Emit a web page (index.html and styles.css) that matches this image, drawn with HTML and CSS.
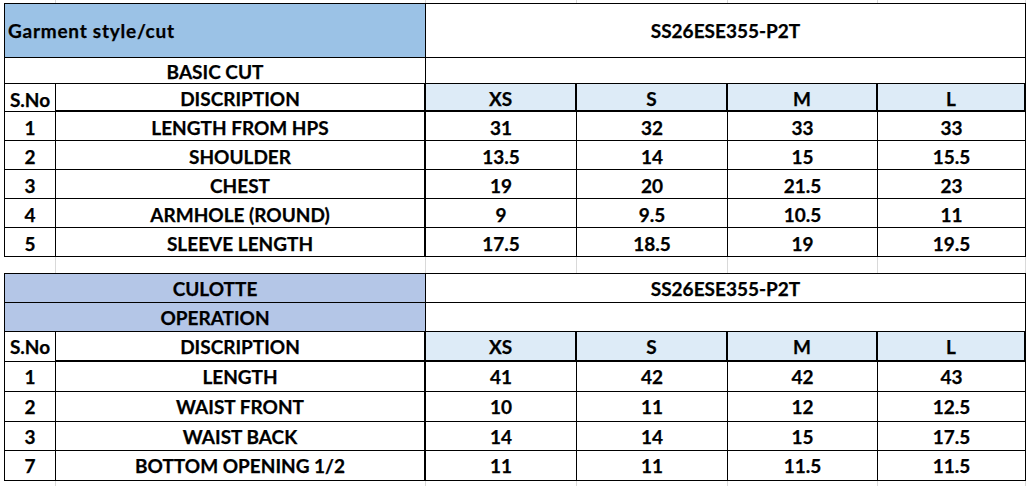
FILE: index.html
```html
<!DOCTYPE html>
<html>
<head>
<meta charset="utf-8">
<title>Garment spec</title>
<link rel="stylesheet" href="styles.css">
</head>
<body>
<div class="sheet">
  <div class="gridstrip strip-top"><span></span><span></span><span></span><span></span><span></span><span></span></div>

  <div class="spec spec-one">
    <div class="c span2 garment">Garment style/cut</div>
    <div class="c span4 code">SS26ESE355-P2T</div>
    <div class="c span2 sub">BASIC CUT</div>
    <div class="c span4 sub"></div>

    <div class="c hd sno">S.No</div>
    <div class="c hd desc thickb">DISCRIPTION</div>
    <div class="c hd size">XS</div>
    <div class="c hd size">S</div>
    <div class="c hd size">M</div>
    <div class="c hd size">L</div>

    <div class="c row">1</div><div class="c row desc">LENGTH FROM HPS</div><div class="c row">31</div><div class="c row">32</div><div class="c row">33</div><div class="c row">33</div>
    <div class="c row">2</div><div class="c row desc">SHOULDER</div><div class="c row">13.5</div><div class="c row">14</div><div class="c row">15</div><div class="c row">15.5</div>
    <div class="c row">3</div><div class="c row desc">CHEST</div><div class="c row">19</div><div class="c row">20</div><div class="c row">21.5</div><div class="c row">23</div>
    <div class="c row">4</div><div class="c row desc">ARMHOLE (ROUND)</div><div class="c row">9</div><div class="c row">9.5</div><div class="c row">10.5</div><div class="c row">11</div>
    <div class="c row">5</div><div class="c row desc">SLEEVE LENGTH</div><div class="c row">17.5</div><div class="c row">18.5</div><div class="c row">19</div><div class="c row">19.5</div>
  </div>

  <div class="gridstrip strip-gap"><span></span><span></span><span></span><span></span><span></span><span></span></div>

  <div class="spec spec-two">
    <div class="c span2 band">CULOTTE</div>
    <div class="c span4">SS26ESE355-P2T</div>
    <div class="c span2 band">OPERATION</div>
    <div class="c span4"></div>

    <div class="c sno">S.No</div>
    <div class="c desc thickb">DISCRIPTION</div>
    <div class="c size">XS</div>
    <div class="c size">S</div>
    <div class="c size">M</div>
    <div class="c size">L</div>

    <div class="c">1</div><div class="c desc">LENGTH</div><div class="c">41</div><div class="c">42</div><div class="c">42</div><div class="c">43</div>
    <div class="c">2</div><div class="c desc">WAIST FRONT</div><div class="c">10</div><div class="c">11</div><div class="c">12</div><div class="c">12.5</div>
    <div class="c">3</div><div class="c desc">WAIST BACK</div><div class="c">14</div><div class="c">14</div><div class="c">15</div><div class="c">17.5</div>
    <div class="c">7</div><div class="c desc">BOTTOM OPENING 1/2</div><div class="c">11</div><div class="c">11</div><div class="c">11.5</div><div class="c">11.5</div>
  </div>

  <div class="gridstrip strip-bottom"><span></span><span></span><span></span><span></span><span></span><span></span></div>
</div>
</body>
</html>
```

FILE: styles.css
```css
* {
  box-sizing: border-box;
}

body {
  margin: 0;
  background: #ffffff;
  color: #000000;
  font-family: Lato, "Liberation Sans", sans-serif;
  font-weight: 700;
  font-size: 19px;
}

.sheet {
  padding-left: 4px;
  width: 1030px;
  display: flex;
  flex-direction: column;
}

.spec,
.gridstrip {
  display: grid;
  grid-template-columns: 51px 370px 151px 151px 150px 148px;
  width: 1022px;
}

.spec {
  border-top: 1px solid #000;
  border-left: 1px solid #000;
}

.spec-one {
  grid-template-rows: 54px 26px 28px repeat(5, 29px);
}

.spec-two {
  grid-template-rows: 29px 29px 30px 30px 30px 29px 30px;
}

.gridstrip {
  padding-left: 1px;
}

.gridstrip span {
  border-right: 1px solid #d9d9d9;
}

.strip-top {
  height: 3px;
}

.strip-gap {
  height: 16px;
}

.strip-bottom {
  height: 5px;
}

.c {
  display: flex;
  align-items: center;
  justify-content: center;
  border-right: 1px solid #000;
  border-bottom: 1px solid #000;
  line-height: 19px;
  white-space: nowrap;
  overflow: hidden;
  -webkit-text-stroke: 0.25px #000;
}

.span2 {
  grid-column: span 2;
}

.span4 {
  grid-column: span 4;
}

.garment {
  background: #9bc2e6;
  justify-content: flex-start;
  padding-left: 3px;
  letter-spacing: 0.75px;
}

.sub {
  padding-top: 2px;
}

.hd,
.row {
  padding-top: 3px;
}

.desc {
  border-right-width: 2px;
}

.thickb {
  border-bottom-width: 2px;
}

.size {
  background: #ddebf7;
  border-right-width: 2px;
  border-bottom-width: 2px;
}

.band {
  background: #b4c6e7;
}
```
